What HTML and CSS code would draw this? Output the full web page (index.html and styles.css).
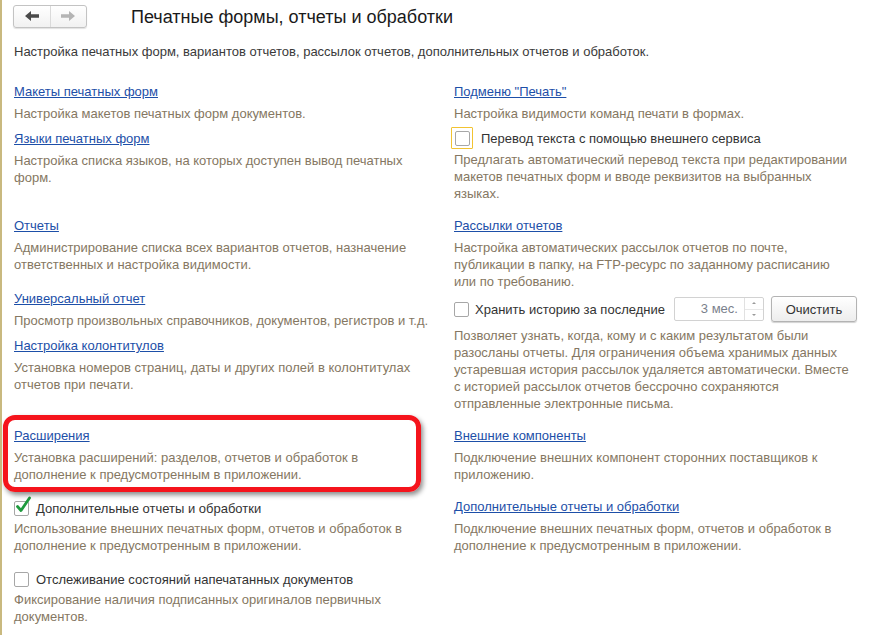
FILE: index.html
```html
<!DOCTYPE html>
<html lang="ru">
<head>
<meta charset="utf-8">
<title>Печатные формы, отчеты и обработки</title>
<link rel="stylesheet" href="styles.css">
</head>
<body>
<div class="page">
  <div class="header">
    <div class="nav">
      <span class="nav-btn">
        <svg width="14" height="10" viewBox="0 0 14 10"><path d="M0 5 L6 0 L6 3.3 L14 3.3 L14 6.7 L6 6.7 L6 10 Z" fill="#4a4a4a"/></svg>
      </span>
      <span class="nav-btn">
        <svg width="14" height="10" viewBox="0 0 14 10"><path d="M14 5 L8 0 L8 3.3 L0 3.3 L0 6.7 L8 6.7 L8 10 Z" fill="#b4b4b4"/></svg>
      </span>
    </div>
    <h1 class="title">Печатные формы, отчеты и обработки</h1>
  </div>

  <p class="subtitle">Настройка печатных форм, вариантов отчетов, рассылок отчетов, дополнительных отчетов и обработок.</p>

  <div class="grid">
    <!-- row 1 -->
    <div class="cell left">
      <div class="item">
        <a class="link" href="#">Макеты печатных форм</a>
        <div class="desc">Настройка макетов печатных форм документов.</div>
      </div>
      <div class="item">
        <a class="link" href="#">Языки печатных форм</a>
        <div class="desc">Настройка списка языков, на которых доступен вывод печатных форм.</div>
      </div>
    </div>
    <div class="cell right">
      <div class="item">
        <a class="link" href="#">Подменю "Печать"</a>
        <div class="desc">Настройка видимости команд печати в формах.</div>
      </div>
      <div class="item check-item">
        <label class="check focused">
          <span class="focus-ring"><span class="box"></span></span>
          <span class="check-label">Перевод текста с помощью внешнего сервиса</span>
        </label>
        <div class="desc">Предлагать автоматический перевод текста при редактировании макетов печатных форм и вводе реквизитов на выбранных языках.</div>
      </div>
    </div>

    <!-- row 2 -->
    <div class="cell left">
      <div class="item">
        <a class="link" href="#">Отчеты</a>
        <div class="desc">Администрирование списка всех вариантов отчетов, назначение ответственных и настройка видимости.</div>
      </div>
      <div class="item group-start">
        <a class="link" href="#">Универсальный отчет</a>
        <div class="desc">Просмотр произвольных справочников, документов, регистров и т.д.</div>
      </div>
      <div class="item">
        <a class="link" href="#">Настройка колонтитулов</a>
        <div class="desc">Установка номеров страниц, даты и других полей в колонтитулах отчетов при печати.</div>
      </div>
    </div>
    <div class="cell right">
      <div class="item">
        <a class="link" href="#">Рассылки отчетов</a>
        <div class="desc">Настройка автоматических рассылок отчетов по почте, публикации в папку, на FTP-ресурс по заданному расписанию или по требованию.</div>
      </div>
      <div class="item controls-item">
        <div class="controls">
          <label class="check">
            <span class="box"></span>
            <span class="check-label">Хранить историю за последние</span>
          </label>
          <div class="spin">
            <span class="spin-value">3 мес.</span>
            <span class="spin-btns">
              <span class="spin-up"></span>
              <span class="spin-down"></span>
            </span>
          </div>
          <button class="btn" type="button">Очистить</button>
        </div>
        <div class="desc">Позволяет узнать, когда, кому и с каким результатом были разосланы отчеты. Для ограничения объема хранимых данных устаревшая история рассылок удаляется автоматически. Вместе с историей рассылок отчетов бессрочно сохраняются отправленные электронные письма.</div>
      </div>
    </div>

    <!-- row 3 -->
    <div class="cell left">
      <div class="item">
        <a class="link" href="#">Расширения</a>
        <div class="desc">Установка расширений: разделов, отчетов и обработок в дополнение к предусмотренным в приложении.</div>
      </div>
    </div>
    <div class="cell right">
      <div class="item">
        <a class="link" href="#">Внешние компоненты</a>
        <div class="desc">Подключение внешних компонент сторонних поставщиков к приложению.</div>
      </div>
    </div>

    <!-- row 4 -->
    <div class="cell left">
      <div class="item">
        <label class="check">
          <span class="box checked">
            <svg class="tick" width="18" height="19" viewBox="0 0 18 19"><path d="M3.5 10.5 L7 14.5 L15.5 2" fill="none" stroke="#1f9a3e" stroke-width="2.8" stroke-linecap="round" stroke-linejoin="round"/></svg>
          </span>
          <span class="check-label">Дополнительные отчеты и обработки</span>
        </label>
        <div class="desc">Использование внешних печатных форм, отчетов и обработок в дополнение к предусмотренным в приложении.</div>
      </div>
    </div>
    <div class="cell right">
      <div class="item">
        <a class="link" href="#">Дополнительные отчеты и обработки</a>
        <div class="desc">Подключение внешних печатных форм, отчетов и обработок в дополнение к предусмотренным в приложении.</div>
      </div>
    </div>

    <!-- row 5 -->
    <div class="cell left">
      <div class="item">
        <label class="check">
          <span class="box"></span>
          <span class="check-label">Отслеживание состояний напечатанных документов</span>
        </label>
        <div class="desc">Фиксирование наличия подписанных оригиналов первичных документов.</div>
      </div>
    </div>
    <div class="cell right"></div>
  </div>

  <div class="highlight"></div>
</div>
</body>
</html>
```

FILE: styles.css
```css
* {
  box-sizing: border-box;
}

html, body {
  margin: 0;
  padding: 0;
  background: #ffffff;
}

body {
  font-family: "Liberation Sans", Arial, sans-serif;
  font-size: 13px;
  color: #333333;
}

.page {
  position: relative;
  width: 893px;
  height: 635px;
  overflow: hidden;
  border-left: 2px solid #c9b97f;
  padding-left: 12px;
}

/* header */
.header {
  display: flex;
  align-items: center;
  height: 31px;
  padding-top: 1px;
}

.nav {
  display: flex;
  width: 74px;
  height: 23px;
  margin-left: -1px;
  border: 1px solid #c3c3c3;
  border-radius: 3px;
  background: linear-gradient(#ffffff, #f1f1f1);
  box-shadow: 0 1px 1px rgba(0, 0, 0, 0.12);
}

.nav-btn {
  flex: 1;
  display: flex;
  align-items: center;
  justify-content: center;
}

.nav-btn + .nav-btn {
  border-left: 1px solid #dadada;
}

.title {
  margin: 2px 0 0 44px;
  font-size: 18px;
  font-weight: normal;
  color: #1a1a1a;
  line-height: 22px;
}

.subtitle {
  margin: 12px 0 0;
  line-height: 17px;
  color: #3a3a3a;
}

/* grid */
.grid {
  display: grid;
  grid-template-columns: 440px 1fr;
  row-gap: 15px;
  margin-top: 23px;
}

.cell {
  display: flex;
  flex-direction: column;
}

.cell.left .desc {
  max-width: 418px;
}

.cell.right .desc {
  max-width: 398px;
}

.item + .item {
  margin-top: 8px;
}

.item.group-start {
  margin-top: 17px;
}

.item.check-item {
  margin-top: 6px;
}

.item.controls-item {
  margin-top: 6px;
}

.link {
  display: inline-block;
  line-height: 17px;
  color: #1d4fa8;
  text-decoration: underline;
  margin-bottom: 5px;
}

.desc {
  line-height: 17px;
  color: #857762;
}

/* checkboxes */
.check {
  display: flex;
  align-items: center;
  height: 20px;
  margin-bottom: 2px;
  color: #333333;
}

.check.focused {
  margin-bottom: 3px;
}

.box {
  position: relative;
  display: inline-block;
  width: 15px;
  height: 15px;
  border: 1px solid #a7a7a7;
  border-radius: 2px;
  background: #ffffff;
  flex: none;
}

.tick {
  position: absolute;
  left: -1px;
  top: -6px;
}

.check-label {
  margin-left: 7px;
  line-height: 17px;
}

.focus-ring {
  display: inline-flex;
  align-items: center;
  justify-content: center;
  width: 22px;
  height: 22px;
  margin-left: -3px;
  border: 1px solid #f2c331;
  border-radius: 1px;
}

.check.focused .check-label {
  margin-left: 8px;
}

/* history controls */
.controls-item .controls {
  display: flex;
  align-items: center;
  height: 26px;
  margin-bottom: 5px;
}

.controls .check {
  margin-bottom: 0;
}

.controls .check-label {
  margin-left: 6px;
}

.spin {
  display: flex;
  width: 90px;
  height: 24px;
  margin-left: 9px;
  border: 1px solid #d2d2d2;
  border-radius: 2px;
  background: #ffffff;
}

.spin-value {
  flex: 1;
  text-align: right;
  padding-right: 6px;
  line-height: 22px;
  color: #7a7f8c;
}

.spin-btns {
  width: 19px;
  display: flex;
  flex-direction: column;
  border-left: 1px solid #e1e1e1;
}

.spin-up,
.spin-down {
  flex: 1;
  display: flex;
  align-items: center;
  justify-content: center;
}

.spin-up {
  border-bottom: 1px solid #e8e8e8;
}

.spin-up::before {
  content: "";
  border-left: 2px solid transparent;
  border-right: 2px solid transparent;
  border-bottom: 2px solid #9a9a9a;
}

.spin-down::before {
  content: "";
  border-left: 2px solid transparent;
  border-right: 2px solid transparent;
  border-top: 2px solid #9a9a9a;
}

.btn {
  width: 86px;
  height: 26px;
  margin-left: 7px;
  padding: 0;
  font-family: "Liberation Sans", Arial, sans-serif;
  font-size: 13px;
  color: #333333;
  border: 1px solid #b3b3b3;
  border-radius: 3px;
  background: linear-gradient(#ffffff, #ededed);
  box-shadow: 0 1px 1px rgba(0, 0, 0, 0.18);
}

/* red annotation frame */
.highlight {
  position: absolute;
  left: 1px;
  top: 415px;
  width: 418px;
  height: 77px;
  border: 5px solid #f5141c;
  border-radius: 12px;
  box-shadow: 2px 3px 5px rgba(0, 0, 0, 0.45);
}
```
